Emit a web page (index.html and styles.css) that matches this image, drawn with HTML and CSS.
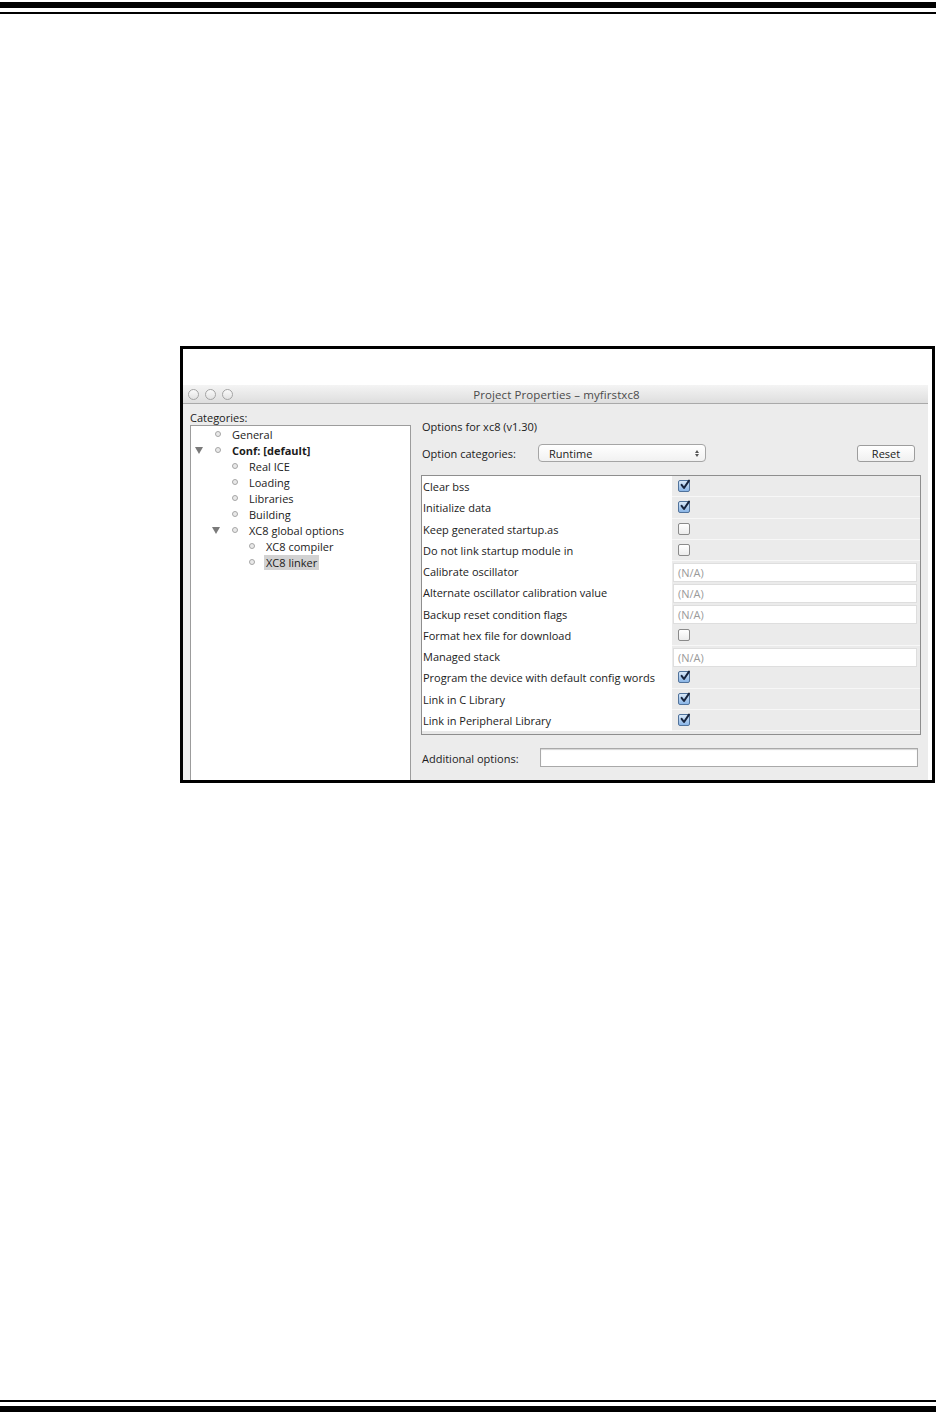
FILE: index.html
```html
<!DOCTYPE html>
<html>
<head>
<meta charset="utf-8">
<title>Project Properties</title>
<link rel="stylesheet" href="styles.css">
</head>
<body>
<div class="page">
  <div class="rules rules-top">
    <div class="bar-thick"></div>
    <div class="bar-thin"></div>
  </div>

  <div class="figure">
    <div class="window">
      <div class="titlebar">
        <div class="lights">
          <span class="light"></span><span class="light"></span><span class="light"></span>
        </div>
        <div class="title">Project Properties – myfirstxc8</div>
        <div></div>
      </div>
      <div class="win-body">
        <div class="left">
          <div class="cat-label">Categories:</div>
          <div class="tree">
            <div class="node lvl0"><span class="twisty"></span><span class="dot"></span><span class="lbl">General</span></div>
            <div class="node lvl0"><span class="twisty open"></span><span class="dot"></span><span class="lbl bold">Conf: [default]</span></div>
            <div class="node lvl1"><span class="twisty"></span><span class="dot"></span><span class="lbl">Real ICE</span></div>
            <div class="node lvl1"><span class="twisty"></span><span class="dot"></span><span class="lbl">Loading</span></div>
            <div class="node lvl1"><span class="twisty"></span><span class="dot"></span><span class="lbl">Libraries</span></div>
            <div class="node lvl1"><span class="twisty"></span><span class="dot"></span><span class="lbl">Building</span></div>
            <div class="node lvl1"><span class="twisty open"></span><span class="dot"></span><span class="lbl">XC8 global options</span></div>
            <div class="node lvl2"><span class="twisty"></span><span class="dot"></span><span class="lbl">XC8 compiler</span></div>
            <div class="node lvl2"><span class="twisty"></span><span class="dot"></span><span class="lbl selected">XC8 linker</span></div>
          </div>
        </div>
        <div class="right">
          <div class="opts-title">Options for xc8 (v1.30)</div>
          <div class="cat-row">
            <span class="cat-row-label">Option categories:</span>
            <div class="select">
              <span>Runtime</span>
              <span class="arrows"><span class="up"></span><span class="down"></span></span>
            </div>
            <div class="btn">Reset</div>
          </div>
          <div class="table">
            <div class="row"><div class="name">Clear bss</div><div class="val chk"><span class="cb on"><svg viewBox="0 0 12 12" width="12" height="12"><path d="M2.6 5.8 L5 9 L10 1.6" fill="none" stroke="#17243d" stroke-width="2" stroke-linecap="round" stroke-linejoin="round"/></svg></span></div></div>
            <div class="row"><div class="name">Initialize data</div><div class="val chk"><span class="cb on"><svg viewBox="0 0 12 12" width="12" height="12"><path d="M2.6 5.8 L5 9 L10 1.6" fill="none" stroke="#17243d" stroke-width="2" stroke-linecap="round" stroke-linejoin="round"/></svg></span></div></div>
            <div class="row"><div class="name">Keep generated startup.as</div><div class="val chk"><span class="cb"></span></div></div>
            <div class="row"><div class="name">Do not link startup module in</div><div class="val chk"><span class="cb"></span></div></div>
            <div class="row"><div class="name">Calibrate oscillator</div><div class="val txt"><span class="field">(N/A)</span></div></div>
            <div class="row"><div class="name">Alternate oscillator calibration value</div><div class="val txt"><span class="field">(N/A)</span></div></div>
            <div class="row"><div class="name">Backup reset condition flags</div><div class="val txt"><span class="field">(N/A)</span></div></div>
            <div class="row"><div class="name">Format hex file for download</div><div class="val chk"><span class="cb"></span></div></div>
            <div class="row"><div class="name">Managed stack</div><div class="val txt"><span class="field">(N/A)</span></div></div>
            <div class="row"><div class="name">Program the device with default config words</div><div class="val chk"><span class="cb on"><svg viewBox="0 0 12 12" width="12" height="12"><path d="M2.6 5.8 L5 9 L10 1.6" fill="none" stroke="#17243d" stroke-width="2" stroke-linecap="round" stroke-linejoin="round"/></svg></span></div></div>
            <div class="row"><div class="name">Link in C Library</div><div class="val chk"><span class="cb on"><svg viewBox="0 0 12 12" width="12" height="12"><path d="M2.6 5.8 L5 9 L10 1.6" fill="none" stroke="#17243d" stroke-width="2" stroke-linecap="round" stroke-linejoin="round"/></svg></span></div></div>
            <div class="row"><div class="name">Link in Peripheral Library</div><div class="val chk"><span class="cb on"><svg viewBox="0 0 12 12" width="12" height="12"><path d="M2.6 5.8 L5 9 L10 1.6" fill="none" stroke="#17243d" stroke-width="2" stroke-linecap="round" stroke-linejoin="round"/></svg></span></div></div>
          </div>
          <div class="add-row">
            <span class="add-label">Additional options:</span>
            <div class="add-input"></div>
          </div>
        </div>
      </div>
    </div>
  </div>

  <div class="spacer"></div>

  <div class="rules rules-bottom">
    <div class="bar-thin"></div>
    <div class="bar-thick"></div>
  </div>
</div>
</body>
</html>
```

FILE: styles.css
```css
html, body {
  margin: 0;
  padding: 0;
  background: #ffffff;
}

.page {
  width: 936px;
  height: 1428px;
  display: flex;
  flex-direction: column;
  font-family: "Open Sans", "DejaVu Sans", sans-serif;
  color: #1b1b1b;
}

.rules {
  display: flex;
  flex-direction: column;
  gap: 4px;
}
.rules-top { padding-top: 2px; }
.rules-bottom { padding-bottom: 16px; }
.bar-thick { height: 6px; background: #000; }
.bar-thin { height: 2px; background: #000; }

.spacer { flex: 1; }

.figure {
  margin-top: 332px;
  margin-left: 180px;
  width: 755px;
  height: 437px;
  box-sizing: border-box;
  border: 3px solid #000;
  background: #fff;
  overflow: hidden;
  padding-top: 36px;
  padding-right: 4px;
}

.window {
  height: calc(100% + 12px);
  display: flex;
  flex-direction: column;
  background: #ececec;
}

.titlebar {
  height: 18px;
  flex: none;
  display: grid;
  grid-template-columns: 1fr auto 1fr;
  align-items: center;
  background: linear-gradient(#f4f4f4, #dedede);
  border-bottom: 1px solid #a9a9a9;
}
.lights {
  display: flex;
  gap: 6px;
  padding-left: 5px;
}
.light {
  width: 9px;
  height: 9px;
  border-radius: 50%;
  border: 1px solid #a4a4a4;
  background: linear-gradient(#fafafa, #e2e2e2);
}
.title {
  font-size: 11.5px;
  color: #4b4b4b;
  letter-spacing: 0.1px;
  padding-left: 2px;
}

.win-body {
  flex: 1;
  display: flex;
  min-height: 0;
}

.left {
  width: 228px;
  flex: none;
  box-sizing: border-box;
  padding-left: 7px;
  display: flex;
  flex-direction: column;
}
.cat-label {
  font-size: 11px;
  line-height: 14px;
  padding-top: 7px;
  height: 14px;
}
.tree {
  flex: 1;
  width: 221px;
  box-sizing: border-box;
  background: #fff;
  border: 1px solid #9c9c9c;
  padding-top: 0;
}
.node {
  height: 16px;
  display: flex;
  align-items: center;
  font-size: 11px;
}
.node.lvl0 { padding-left: 2px; }
.node.lvl1 { padding-left: 19px; }
.node.lvl2 { padding-left: 36px; }
.twisty {
  width: 12px;
  height: 8px;
  flex: none;
  display: flex;
  justify-content: center;
  align-items: center;
}
.twisty.open::before {
  content: "";
  width: 0;
  height: 0;
  border-left: 4px solid transparent;
  border-right: 4px solid transparent;
  border-top: 7px solid #7a7a7a;
}
.dot {
  width: 4px;
  height: 4px;
  flex: none;
  margin-left: 10px;
  border-radius: 50%;
  border: 1px solid #a6a6a6;
  background: #e9e9e9;
}
.lbl {
  margin-left: 11px;
  line-height: 15px;
  white-space: nowrap;
}
.lbl.bold { font-weight: 700; }
.lbl.selected {
  background: #d2d2d2;
  margin-left: 9px;
  padding: 0 2px;
}

.right {
  flex: 1;
  box-sizing: border-box;
  padding-left: 10px;
  padding-right: 7px;
  display: flex;
  flex-direction: column;
}
.opts-title {
  font-size: 11px;
  line-height: 14px;
  padding-top: 16px;
  padding-left: 1px;
}
.cat-row {
  margin-top: 10px;
  height: 18px;
  display: flex;
  align-items: center;
  font-size: 11px;
}
.cat-row-label {
  width: 116px;
  padding-left: 1px;
  flex: none;
}
.select {
  width: 168px;
  height: 18px;
  box-sizing: border-box;
  border: 1px solid #a5a5a5;
  border-radius: 4px;
  background: linear-gradient(#ffffff, #f1f1f1);
  display: flex;
  align-items: center;
  justify-content: space-between;
  padding: 0 6px 0 10px;
}
.arrows {
  display: flex;
  flex-direction: column;
  gap: 1px;
}
.arrows .up {
  width: 0; height: 0;
  border-left: 2px solid transparent;
  border-right: 2px solid transparent;
  border-bottom: 3px solid #555;
}
.arrows .down {
  width: 0; height: 0;
  border-left: 2px solid transparent;
  border-right: 2px solid transparent;
  border-top: 3px solid #555;
}
.btn {
  margin-left: auto;
  margin-right: 6px;
  width: 58px;
  height: 17px;
  box-sizing: border-box;
  border: 1px solid #9d9d9d;
  border-radius: 3px;
  background: linear-gradient(#ffffff, #f0f0f0);
  display: flex;
  align-items: center;
  justify-content: center;
  font-size: 11px;
}

.table {
  margin-top: 13px;
  width: 500px;
  box-sizing: border-box;
  border: 1px solid #8e8e8e;
  background: #e9e9e9;
  padding-bottom: 3px;
}
.row {
  height: 21.25px;
  display: grid;
  grid-template-columns: 250px 1fr;
}
.name {
  background: #fff;
  font-size: 11px;
  display: flex;
  align-items: center;
  padding-left: 1px;
  white-space: nowrap;
}
.val {
  display: flex;
  align-items: center;
}
.val.chk {
  background: #ebebeb;
  border-bottom: 1px solid #f7f7f7;
  padding-left: 6px;
}
.val.txt {
  background: #ebebeb;
  padding: 1px 3px 0 1px;
}
.field {
  flex: 1;
  height: 19px;
  box-sizing: border-box;
  background: #fff;
  border: 1px solid #dedede;
  font-size: 11px;
  color: #9a9a9a;
  display: flex;
  align-items: center;
  padding-left: 4px;
}
.cb {
  width: 12px;
  height: 12px;
  box-sizing: border-box;
  border: 1px solid #8a8a8a;
  border-radius: 2px;
  background: linear-gradient(#ffffff, #ececec);
  display: flex;
  align-items: center;
  justify-content: center;
}
.cb.on {
  border-color: #51739c;
  background: linear-gradient(#d8e8f8, #8ab5e6);
}
.cb svg {
  flex: none;
  margin-top: -2px;
  margin-left: 1px;
}

.add-row {
  margin-top: 13px;
  display: flex;
  align-items: center;
  font-size: 11px;
}
.add-label {
  width: 118px;
  flex: none;
  padding-left: 1px;
  line-height: 14px;
  padding-top: 3px;
}
.add-input {
  flex: 1;
  height: 19px;
  margin-right: 3px;
  box-sizing: border-box;
  background: #fff;
  border: 1px solid #a9a9a9;
  box-shadow: inset 0 1px 1px #d4d4d4;
}
```
